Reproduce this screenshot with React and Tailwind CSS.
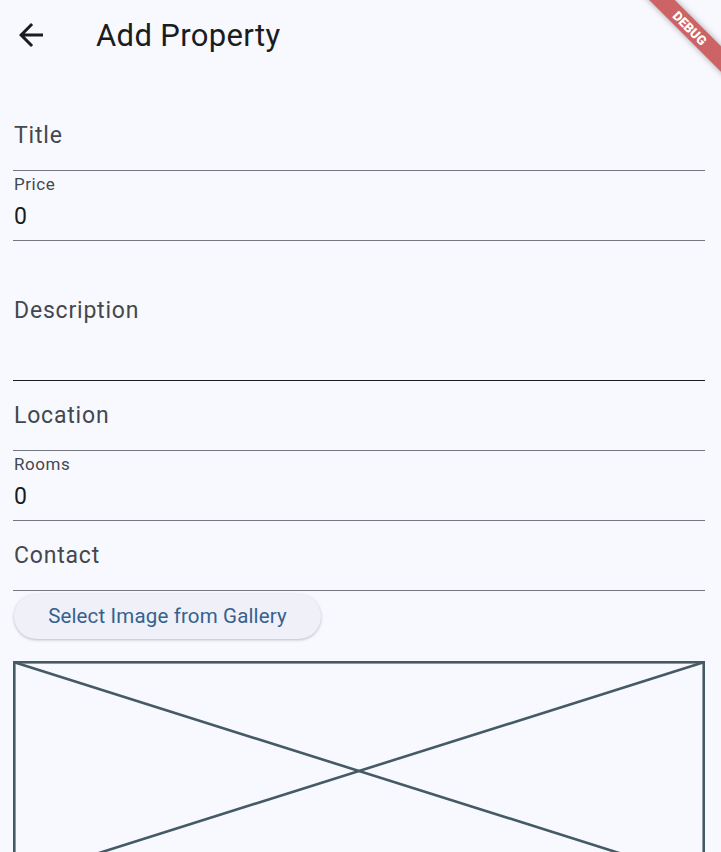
import React from "react";

function Field({ label, value, tall = false, dark = false }) {
  return (
    <div
      className={`flex flex-col border-b ${dark ? "border-[#1a1c1e]" : "border-[#74777f]"} ${
        tall ? "h-[140px]" : "h-[70px]"
      } ${value === undefined ? "justify-center" : "justify-start pt-[5px]"}`}
    >
      {value === undefined ? (
        <span className="text-[23px] leading-none tracking-[0.8px] text-[#44474e] pl-px">{label}</span>
      ) : (
        <>
          <span className="text-[17px] leading-none tracking-[0.55px] text-[#44474e] pl-px">{label}</span>
          <span className="mt-[12px] text-[23px] leading-none tracking-[0.8px] text-[#1a1c1e] pl-px">{value}</span>
        </>
      )}
    </div>
  );
}

export default function App() {
  return (
    <div className="relative h-[852px] w-full overflow-hidden bg-[#f8f9ff] font-['Roboto',sans-serif]">
      {/* App bar */}
      <div className="flex h-[70px] items-center">
        <button aria-label="Back" className="ml-[13px] flex h-9 w-9 items-center justify-center text-[#1a1c1e]">
          <svg viewBox="0 0 24 24" width="36" height="36" fill="currentColor">
            <path d="M20 11H7.83l5.59-5.59L12 4l-8 8 8 8 1.41-1.41L7.83 13H20v-2z" />
          </svg>
        </button>
        <h1 className="ml-[47px] text-[31px] leading-none tracking-[0.35px] text-[#1a1c1e]">Add Property</h1>
      </div>

      {/* Form */}
      <div className="flex flex-col pl-[13px] pr-[16px] pt-[31px]">
        <Field label="Title" />
        <Field label="Price" value="0" />
        <Field label="Description" tall dark />
        <Field label="Location" />
        <Field label="Rooms" value="0" />
        <Field label="Contact" />

        <button className="mt-[3px] ml-px flex h-[45px] w-[307px] items-center justify-center rounded-full bg-[#eff0f8] text-[20.5px] leading-none tracking-[0.15px] text-[#36618f] shadow-[0_1px_3px_rgba(0,0,0,0.25)]">
          Select Image from Gallery
        </button>

        <div className="mt-[22px]">
          <svg width="692" height="220" viewBox="0 0 692 220">
            <rect x="1.3" y="1.3" width="689.4" height="217.4" fill="none" stroke="#455a64" strokeWidth="2.6" />
            <line x1="1.3" y1="1.3" x2="690.7" y2="218.7" stroke="#455a64" strokeWidth="2.6" />
            <line x1="690.7" y1="1.3" x2="1.3" y2="218.7" stroke="#455a64" strokeWidth="2.6" />
          </svg>
        </div>
      </div>

      {/* Debug banner */}
      <div className="pointer-events-none absolute left-[630px] top-[19px] flex h-[18px] w-[120px] rotate-45 items-center justify-center bg-[#b71c1c]/[0.68] shadow-[0_0_6px_rgba(0,0,0,0.35)]">
        <span className="text-[13px] font-black leading-none text-white">DEBUG</span>
      </div>
    </div>
  );
}
